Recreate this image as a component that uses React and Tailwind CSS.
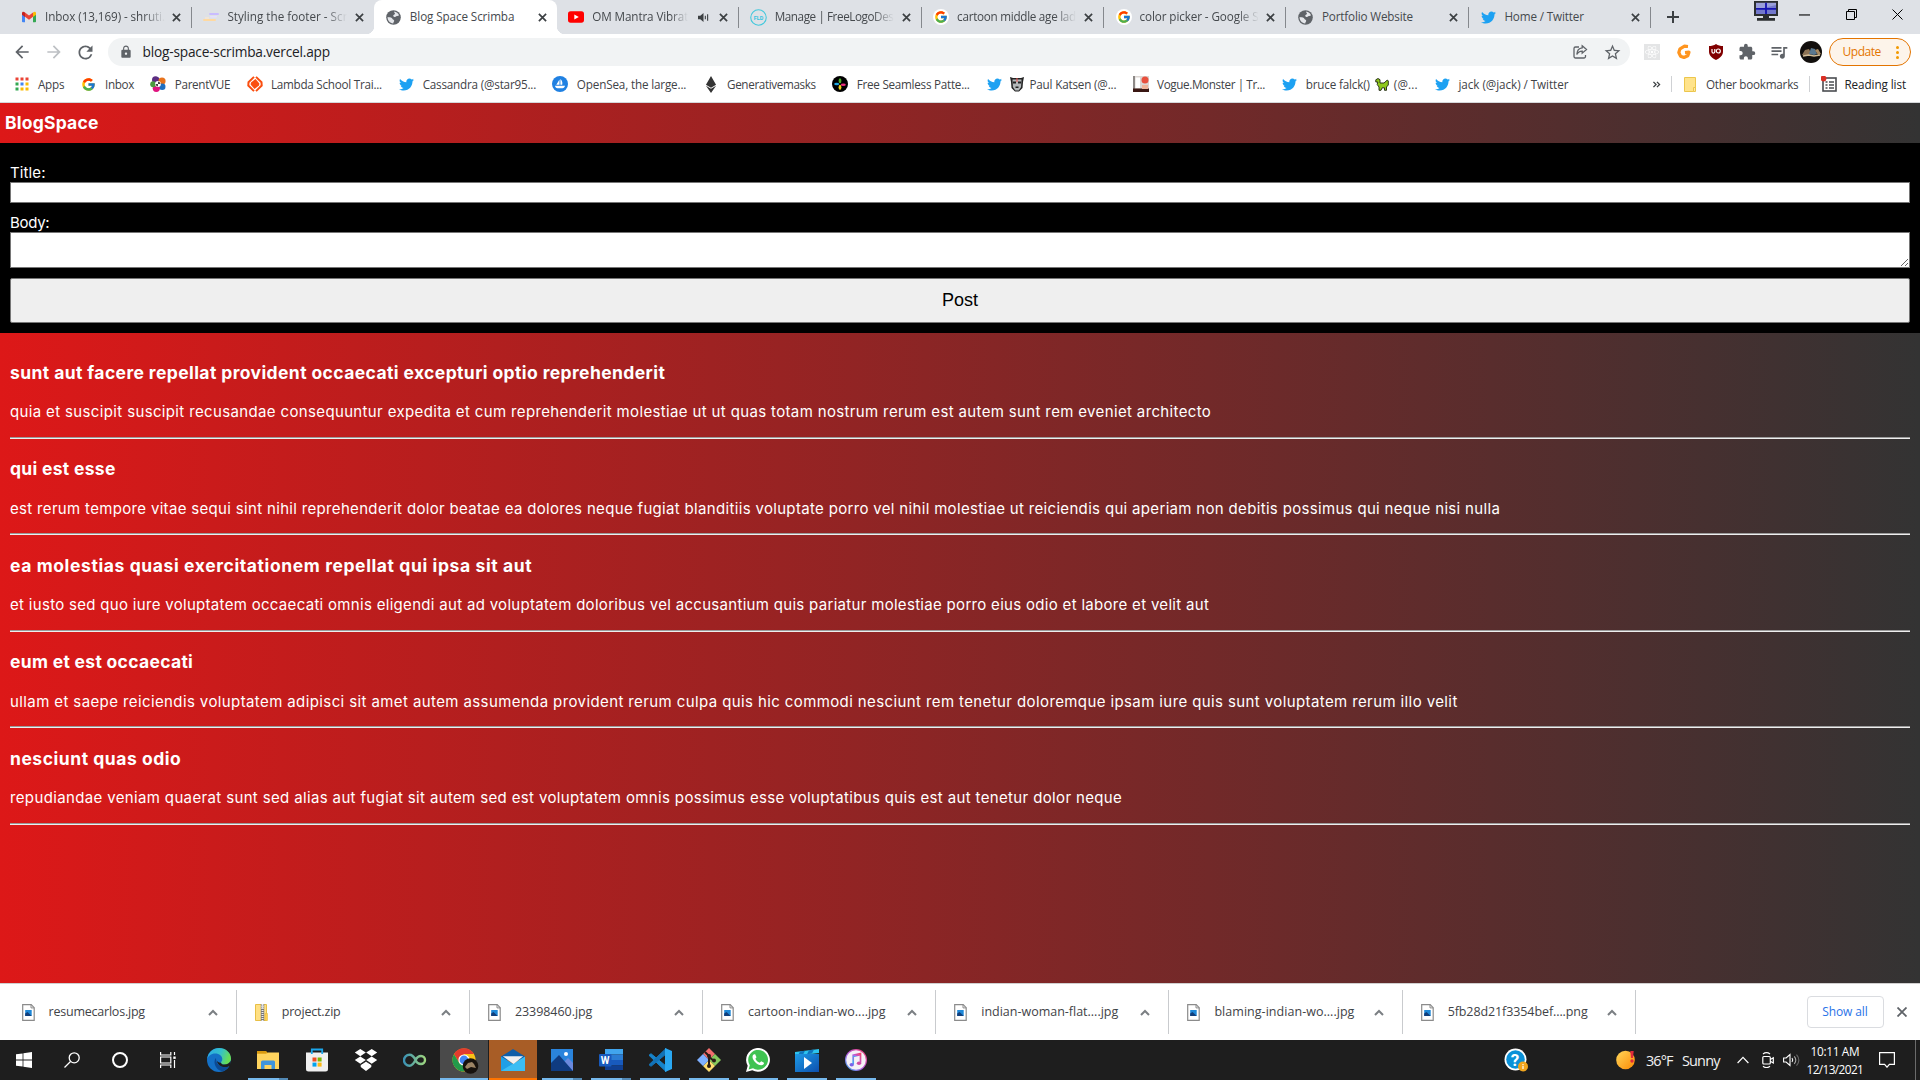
import React, { useLayoutEffect, useRef } from "react";
import { FcGoogle } from "react-icons/fc";
import { FaTwitter, FaReact, FaEthereum } from "react-icons/fa";
import { MdLock, MdExtension, MdQueueMusic, MdStarOutline, MdArrowBack, MdArrowForward, MdRefresh } from "react-icons/md";

/* Text set to an exact advance width by spreading its letter spacing. */
function Fit({ w, children, className = "" }) {
  const ref = useRef(null);
  useLayoutEffect(() => {
    const el = ref.current;
    el.style.letterSpacing = "0px";
    const natural = el.getBoundingClientRect().width;
    el.style.letterSpacing = `${(w - natural) / Math.max(1, children.length - 0.5)}px`;
  }, [w, children]);
  return (
    <span className={`block shrink-0 whitespace-pre ${className}`} style={{ width: w }}>
      <span ref={ref}>{children}</span>
    </span>
  );
}

const Twitter = () => <FaTwitter className="size-[15px] text-[#1da1f2]" />;
const Globe = () => (
  <svg viewBox="0 0 16 16" className="size-[15px]">
    <circle cx="8" cy="8" r="7.800" fill="#5f6368" />
    <path d="M8.800 1.700C11 2 13 3.500 13.900 5.700c-1.200.9-2.400.5-3.200 1.300-.9.900-2.900.2-3-1 0-1.100 1.700-1 1.900-2 .1-.8-1.300-1-.8-2.300z" fill="#e4e6ea" />
    <path d="M1.700 7.500c1.700.3 3.300.2 4.500 1.100.7.600.5 1.200 1.400 1.500 1.200.4 1.500 1.500.8 2.400-.5.600-.6 1-.7 1.800C4.300 14.200 1.500 11.200 1.700 7.500z" fill="#e4e6ea" />
  </svg>
);
const Close = () => (
  <svg viewBox="0 0 10 10" className="size-[9px]" stroke="#3c4043" strokeWidth="1.900">
    <path d="M1 1l8 8M9 1l-8 8" />
  </svg>
);
const Gmail = () => (
  <svg viewBox="0 0 16 16" className="size-4">
    <path d="M1 4v8.500c0 .5.4.8.8.8H4V6.500z" fill="#4285f4" />
    <path d="M12 6.500v6.800h2.200c.5 0 .8-.4.8-.8V4z" fill="#34a853" />
    <path d="M4 3.500v4.200L8 10.700l4-3V3.500L8 6.500z" fill="#ea4335" />
    <path d="M1 4.200v1.500l3 2.200V3.600C2.500 2.200 1 2.800 1 4.200z" fill="#c5221f" />
    <path d="M15 4.200v1.500l-3 2.200V3.600c1.500-1.400 3-.8 3 .6z" fill="#fbbc04" />
  </svg>
);
const Scrimba = () => (
  <svg viewBox="0 0 16 16" className="size-4">
    <rect x="6" y="4" width="10" height="2" rx="1" fill="#c9bcff" />
    <rect x="7" y="7" width="7" height="1.600" rx=".8" fill="#e4dfff" />
    <rect x="0" y="10" width="13" height="2" rx="1" fill="#ffd9a0" />
    <rect x="2" y="8.500" width="4" height="1" fill="#ffe9cc" />
  </svg>
);
const Youtube = () => (
  <svg viewBox="0 0 16 16" className="size-4">
    <rect x="0" y="2.300" width="16" height="11.400" rx="2.600" fill="#f00" />
    <path d="M6.300 5.400v5.200L10.800 8z" fill="#fff" />
  </svg>
);
const Fld = () => (
  <svg viewBox="0 0 16 16" className="size-[17px]">
    <circle cx="8" cy="8" r="7.300" fill="none" stroke="#41c8dc" strokeWidth="1" />
    <text x="8" y="9.900" textAnchor="middle" fontSize="5.200" fontWeight="700" fontFamily="Roboto" fill="#35c3e0">FLD</text>
  </svg>
);
const GoogleDisc = () => (
  <span className="flex size-4 items-center justify-center rounded-full bg-white"><FcGoogle className="size-[14px]" /></span>
);
const Sound = () => (
  <svg viewBox="0 0 12 12" className="size-[11px]" fill="#3c4043">
    <path d="M0 4h2.500L6 1v10L2.500 8H0z" />
    <path d="M8 4v4M10.500 2.500v7" stroke="#3c4043" strokeWidth="1.200" />
  </svg>
);

const tabs = [
  { icon: <Gmail />, t: "Inbox (13,169) - shruti.", w: 120, fade: true, sep: true },
  { icon: <Scrimba />, t: "Styling the footer - Scr", w: 120, fade: true },
  { icon: <Globe />, t: "Blog Space Scrimba", w: 104.500, active: true },
  { icon: <Youtube />, t: "OM Mantra Vibrat", w: 96, fade: true, sound: true, sep: true },
  { icon: <Fld />, t: "Manage | FreeLogoDes", w: 119, fade: true, sep: true },
  { icon: <GoogleDisc />, t: "cartoon middle age lad", w: 119, fade: true, sep: true },
  { icon: <GoogleDisc />, t: "color picker - Google S", w: 119, fade: true, sep: true },
  { icon: <Globe />, t: "Portfolio Website", w: 91, sep: true },
  { icon: <Twitter />, t: "Home / Twitter", w: 79.500, sep: true },
];

function Tab({ tab }) {
  return (
    <div className={`relative flex h-[34px] w-[182.43px] shrink-0 items-center pl-[11px] ${tab.active ? "rounded-t-lg bg-white" : ""}`}>
      {tab.active && (
        <>
          <span className="absolute -left-2 bottom-0 size-2 bg-[radial-gradient(circle_at_0_0,#dee1e6_8px,#fff_8.5px)]" />
          <span className="absolute -right-2 bottom-0 size-2 bg-[radial-gradient(circle_at_100%_0,#dee1e6_8px,#fff_8.5px)]" />
        </>
      )}
      <span className="flex w-[17px] shrink-0 justify-center">{tab.icon}</span>
      <div className={`ml-[7.5px] flex text-[11.7px] text-[#45494d] ${tab.fade ? "[mask-image:linear-gradient(to_right,#000_82%,transparent)]" : ""}`}>
        <Fit w={tab.w}>{tab.t}</Fit>
      </div>
      {tab.sound && <span className="ml-[10px]"><Sound /></span>}
      <span className="mr-[10px] ml-auto"><Close /></span>
      {tab.sep && <span className="h-[21px] w-px bg-[#85888d]" />}
    </div>
  );
}

const Monitor = () => (
  <svg viewBox="0 0 24 20" className="h-5 w-6">
    <path d="M0 0h24v15H0z" fill="#2b2e30" />
    <path d="M2 1.800h20v11.200H2z" fill="#9a9fda" />
    <path d="M2 9l20-5v9H2z" fill="#7378cc" />
    <path d="M12 1.800v11.200M2 7.800h20" stroke="#1512b0" strokeWidth="1.800" />
    <path d="M9 15h6v2h6v2.800H3V17h6z" fill="#2b2e30" />
  </svg>
);

function TabStrip() {
  return (
    <div className="flex h-[34px] bg-[#dee1e6] pl-[9.5px]">
      {tabs.map((t) => <Tab key={t.t} tab={t} />)}
      <div className="flex w-[44px] items-center justify-center">
        <svg viewBox="0 0 14 14" className="size-[14px]" stroke="#3c4043" strokeWidth="2"><path d="M7 1v12M1 7h12" /></svg>
      </div>
      <div className="ml-auto flex h-7 items-center pr-[17px]">
        <span className="mr-[21px] -mt-[6px]"><Monitor /></span>
        <svg viewBox="0 0 12 12" className="mr-[36px] size-[11px]" stroke="#000" strokeWidth="1.200"><path d="M0 6.500h12" /></svg>
        <svg viewBox="0 0 11 11" className="mr-[35px] size-[11px]" stroke="#000" fill="none"><path d="M.5 2.500h8v8h-8zM2.500 2.500v-2h8v8h-2" /></svg>
        <svg viewBox="0 0 11 11" className="size-[11px]" stroke="#000"><path d="M.5.5l10 10M10.500.5l-10 10" /></svg>
      </div>
    </div>
  );
}

function Toolbar() {
  return (
    <div className="flex h-9 items-center bg-white pl-3">
      <MdArrowBack className="size-5 text-[#5f6368]" />
      <MdArrowForward className="ml-[12px] size-5 text-[#bdc0c4]" />
      <MdRefresh className="ml-[11px] size-[21px] text-[#5f6368]" />
      <div className="ml-3 flex h-7 w-[1522px] items-center rounded-full bg-[#f1f3f4] pr-2 pl-[11px]">
        <MdLock className="size-[14px] text-[#5f6368]" />
        <div className="ml-[9.5px] text-[13.700px] text-[#202124]"><Fit w={187.500}>blog-space-scrimba.vercel.app</Fit></div>
        <svg viewBox="0 0 16 16" className="mr-[15px] ml-auto size-4" fill="none" stroke="#5f6368" strokeWidth="1.300">
          <path d="M7 3H3.500A1.500 1.500 0 0 0 2 4.500v8A1.500 1.500 0 0 0 3.500 14h8.500a1.500 1.500 0 0 0 1.500-1.500V11" />
          <path d="M10.200 1.800L14.500 5.500l-4.300 3.700V7.100C7.500 7.100 6 8.200 4.800 10.500 5 6.800 6.800 4.200 10.200 3.900z" />
        </svg>
        <MdStarOutline className="size-[19px] text-[#5f6368]" />
      </div>
      <span className="ml-[13.500px] flex size-4 items-center justify-center bg-[#e4e5e6]"><FaReact className="size-[14px] text-white" /></span>
      <svg viewBox="0 0 16 16" className="ml-4 size-4" fill="none" stroke="#ff951f" strokeWidth="3.200" strokeLinejoin="round">
        <path d="M12 2.500L8.500 2.200 4 4.800 2.800 8.500 4.500 12.200 8 13.500l3.800-1.700L13 8.200 9 8.600" />
      </svg>
      <svg viewBox="0 0 16 16" className="ml-4 size-4">
        <path d="M8 0c2 1.600 4.500 2 7 2v5.500c0 4-3 6.800-7 8.500-4-1.700-7-4.500-7-8.500V2c2.500 0 5-.4 7-2z" fill="#800000" />
        <path d="M4 5v2.700a1.400 1.400 0 0 0 2.800 0V5" stroke="#fff" fill="none" strokeWidth="1.200" />
        <circle cx="10.300" cy="7" r="2" stroke="#fff" strokeWidth="1.200" fill="none" />
      </svg>
      <MdExtension className="ml-[14.500px] size-[18px] text-[#5f6368]" />
      <MdQueueMusic className="ml-[13px] size-5 text-[#5f6368]" />
      <Avatar className="ml-[11px] size-[22px]" />
      <div className="ml-[7px] flex h-7 w-[82px] items-center rounded-full border border-[#e37400] bg-[#fdf4ea] pl-[12.500px] text-[12px] text-[#e37400]">
        <Fit w={38.500}>Update</Fit>
        <span className="ml-[15px] flex flex-col gap-[2px]">
          <i className="size-[3px] rounded-full bg-[#f29900]" /><i className="size-[3px] rounded-full bg-[#f29900]" /><i className="size-[3px] rounded-full bg-[#f29900]" />
        </span>
      </div>
    </div>
  );
}

function Avatar({ className }) {
  return (
    <svg viewBox="0 0 22 22" className={className}>
      <circle cx="11" cy="11" r="11" fill="#120f0d" />
      <path d="M2 14l3-5 4-1 2 4-3 3z" fill="#8d7355" />
      <path d="M9 13l2-6 4 1 2 5-3 1z" fill="#5a7890" />
      <path d="M15 9l3-1 3 5-3 1z" fill="#a98a62" />
      <path d="M3 15l6-1 5 1 6-1" stroke="#d3bd98" strokeWidth="1.300" fill="none" />
    </svg>
  );
}

const AppsGrid = () => (
  <svg viewBox="0 0 16 16" className="size-4">
    {["#ea4335", "#ea4335", "#ea4335", "#34a853", "#4285f4", "#fbbc04", "#34a853", "#fbbc04", "#fbbc04"].map((c, i) => (
      <rect key={i} x={1.500 + (i % 3) * 5} y={1.500 + Math.floor(i / 3) * 5} width="3" height="3" fill={c} />
    ))}
  </svg>
);
const ParentVue = () => (
  <svg viewBox="0 0 16 16" className="size-4">
    <path d="M8 8L2.500 5A4 4 0 0 1 9.500 2.500z" fill="#5b2d82" />
    <circle cx="5.500" cy="3.800" r="3.500" fill="#5b2d82" /><circle cx="12" cy="5" r="3.600" fill="#e8731c" />
    <circle cx="12.200" cy="10.800" r="3.300" fill="#1f6fc0" /><circle cx="6.300" cy="12.300" r="3.600" fill="#e0147f" />
    <circle cx="3.200" cy="8.200" r="3" fill="#4c9a3f" /><circle cx="8" cy="8" r="2.900" fill="#fff" />
    <path d="M8 5.500a3 3 0 0 1 2.500 2.500H8zM8 10.500A3 3 0 0 1 5.500 8H8z" fill="#444" />
  </svg>
);
const Lambda = () => (
  <svg viewBox="0 0 16 16" className="size-4" fill="#fa4e0f">
    <path d="M8.500 3L12.400 7.500 12 9.500 7.500 13 3.600 8.500 4 6.500z" />
    <path d="M7 .9L1.500 6.200 1.300 9.500 7 15.100M9 .9l5.500 5.300.2 3.300L9 15.100" fill="none" stroke="#fa4e0f" strokeWidth="2" />
  </svg>
);
const OpenSea = () => (
  <svg viewBox="0 0 16 16" className="size-4">
    <circle cx="8" cy="8" r="8" fill="#2081e2" />
    <path d="M7.500 3.500v5.200H4.300zM8.400 3c1.800 1.700 2.300 3.500 1.800 5.700H8.400zM3 9.800h10c-.3 1.500-1.300 2.400-2.500 2.400H5.500C4.200 12.200 3.200 11.300 3 9.800z" fill="#fff" />
  </svg>
);
const Seamless = () => (
  <svg viewBox="0 0 16 16" className="size-4">
    <circle cx="8" cy="8" r="8" fill="#000" />
    <ellipse cx="8" cy="4.700" rx="1.400" ry="2.500" fill="#4caf2f" /><ellipse cx="8" cy="11.300" rx="1.400" ry="2.500" fill="#f3d21b" />
    <ellipse cx="4.700" cy="8" rx="2.500" ry="1.300" fill="#21a7e0" /><ellipse cx="11.300" cy="8.700" rx="2.500" ry="1.300" fill="#ec2f7b" />
  </svg>
);
const Vogue = () => (
  <svg viewBox="0 0 16 16" className="size-4">
    <rect width="16" height="16" fill="#dcd6d3" /><path d="M0 0h2v13H0z" fill="#8d8987" /><rect x="2.500" y="1.500" width="4.500" height="10.500" fill="#fff" />
    <rect y="12.500" width="16" height="3.500" fill="#3a1713" /><rect x="9" y="9" width="6" height="4" fill="#f0b49a" />
    <circle cx="12" cy="4" r="3.500" fill="#e8503e" />
  </svg>
);
const Mask = () => (
  <svg viewBox="0 0 14 16" className="h-4 w-[14px]">
    <path d="M0 1l3 1h8l3-1-1 5-.5 6L9 15.500H5L1.500 12 1 6z" fill="#222" />
    <path d="M2.500 3.500h9l-.4 7.500-2.400 3.500H5.300L2.900 11z" fill="#b3b8ba" />
    <path d="M3 5.500h3v2H3zM8 5.500h3v2H8zM5.500 10.500h3v1.500h-3z" fill="#222" /><path d="M6.500 2h1v4h-1z" fill="#e55" />
  </svg>
);
const Dino = () => (
  <svg viewBox="0 0 14 14" className="size-[14px]">
    <path d="M.8 2.800L3 1.500l2 1.200V6h4l3.300-3 1 1v4l-1.800 2v3.300H9.500v-2.500H7.200L6 13.300H4V10L2.200 7.500 2.800 5H.8z" fill="#8fc81c" stroke="#1d2410" strokeWidth=".9" />
  </svg>
);

const bookmarks = [
  [<AppsGrid />, "Apps", 26.500], [<FcGoogle className="size-[15px]" />, "Inbox", 29], [<ParentVue />, "ParentVUE", 55.500],
  [<Lambda />, "Lambda School Trai...", 111], [<Twitter />, "Cassandra (@star95...", 113.500], [<OpenSea />, "OpenSea, the large...", 109.500],
  [<FaEthereum className="size-[17px] text-[#343434]" />, "Generativemasks", 89], [<Seamless />, "Free Seamless Patte...", 113],
];

function Bookmark({ icon, children }) {
  return <div className="mr-[16.3px] flex shrink-0 items-center"><span className="mr-[8.4px] flex w-4 justify-center">{icon}</span>{children}</div>;
}

function Bookmarks() {
  return (
    <div className="flex h-[33px] items-center border-b border-[#d5d7da] bg-white pl-[13.5px] pb-[3px] text-[11.7px] text-[#3f4347]">
      {bookmarks.map(([icon, t, w]) => <Bookmark key={t} icon={icon}><Fit w={w}>{t}</Fit></Bookmark>)}
      <Bookmark icon={<Twitter />}><Mask /><Fit w={87} className="ml-[5px]">Paul Katsen (@...</Fit></Bookmark>
      <Bookmark icon={<Vogue />}><Fit w={108}>Vogue.Monster | Tr...</Fit></Bookmark>
      <Bookmark icon={<Twitter />}><Fit w={64}>bruce falck()</Fit><span className="mx-[5px]"><Dino /></span><Fit w={24}>(@...</Fit></Bookmark>
      <Bookmark icon={<Twitter />}><Fit w={110}>jack (@jack) / Twitter</Fit></Bookmark>
      <div className="ml-auto flex items-center pr-[14px]">
        <svg viewBox="0 0 9 8" className="mr-[10px] h-[7px] w-[9px]" fill="none" stroke="#3c4043" strokeWidth="1.500"><path d="M1 1l3 3-3 3M5 1l3 3-3 3" /></svg>
        <span className="mr-[12px] h-4 w-px bg-[#cfd1d4]" />
        <svg viewBox="0 0 12 15" className="mr-[10.500px] h-[15px] w-3"><path d="M.5.500h11v11.500l-2 0v2.500h-9z" fill="#ffe38b" stroke="#ecc64d" /><path d="M9.500 10.500h2v4h-2z" fill="#ffe9a6" stroke="#ecc64d" /></svg>
        <Fit w={92.500}>Other bookmarks</Fit>
        <span className="mx-[10.500px] h-4 w-px bg-[#cfd1d4]" />
        <svg viewBox="0 0 16 16" className="mr-[8px] size-4">
          <rect x="2" y="2" width="13" height="13" fill="none" stroke="#4a4d51" strokeWidth="1.600" />
          <path d="M4.500 6h2M8 6h5M4.500 9h2M8 9h5M4.500 12h2M8 12h5" stroke="#4a4d51" strokeWidth="1.400" />
          <circle cx="2.500" cy="2.500" r="2.900" fill="#d93025" />
        </svg>
        <Fit w={61.500} className="text-[#202124]">Reading list</Fit>
      </div>
    </div>
  );
}

const posts = [
  ["sunt aut facere repellat provident occaecati excepturi optio reprehenderit", 655, "quia et suscipit suscipit recusandae consequuntur expedita et cum reprehenderit molestiae ut ut quas totam nostrum rerum est autem sunt rem eveniet architecto", 1201],
  ["qui est esse", 105.500, "est rerum tempore vitae sequi sint nihil reprehenderit dolor beatae ea dolores neque fugiat blanditiis voluptate porro vel nihil molestiae ut reiciendis qui aperiam non debitis possimus qui neque nisi nulla", 1490],
  ["ea molestias quasi exercitationem repellat qui ipsa sit aut", 522, "et iusto sed quo iure voluptatem occaecati omnis eligendi aut ad voluptatem doloribus vel accusantium quis pariatur molestiae porro eius odio et labore et velit aut", 1199],
  ["eum et est occaecati", 183, "ullam et saepe reiciendis voluptatem adipisci sit amet autem assumenda provident rerum culpa quis hic commodi nesciunt rem tenetur doloremque ipsam iure quis sunt voluptatem rerum illo velit", 1447.500],
  ["nesciunt quas odio", 171, "repudiandae veniam quaerat sunt sed alias aut fugiat sit autem sed est voluptatem omnis possimus esse voluptatibus quis est aut tenetur dolor neque", 1112],
];

function Page() {
  return (
    <main className="flex h-[880px] flex-col bg-[linear-gradient(to_right,#dd1818,#333333)] font-['Inter',sans-serif] text-white">
      <header className="flex h-10 shrink-0 items-center pl-[5px] text-[17.500px] font-bold"><Fit w={93.500}>BlogSpace</Fit></header>
      <form className="flex h-[190px] shrink-0 flex-col bg-black px-[10px] pt-5 text-[15px] leading-[19px]">
        <label className="block"><Fit w={35.500}>Title:</Fit></label>
        <input className="h-[21px] border border-[#767676] bg-white" />
        <label className="mt-[10px] block"><Fit w={39.500}>Body:</Fit></label>
        <textarea className="h-9 resize-y border border-[#767676] bg-white" />
        <button type="button" className="mt-[10px] h-[45px] shrink-0 rounded-[2px] border border-[#767676] bg-[#efefef] pb-px font-['Liberation_Sans',sans-serif] text-[18px] text-black">Post</button>
      </form>
      <section className="px-[10px] pt-[9.4px]">
        {posts.map(([title, tw, body, bw]) => (
          <article key={title} className="flex h-[96.5px] flex-col pt-[19.3px]">
            <h3 className="text-[17.500px] leading-[22px] font-bold"><Fit w={tw}>{title}</Fit></h3>
            <p className="mt-[18.5px] text-[15px] leading-5"><Fit w={bw}>{body}</Fit></p>
            <hr className="mt-auto h-[2px] border-t border-b border-t-[#9a9a9a] border-b-[#eeeeee]" />
          </article>
        ))}
      </section>
    </main>
  );
}

const JpgFile = () => (
  <svg viewBox="0 0 13 17" className="h-[17px] w-[13px]">
    <path d="M.7.700h8.500l3 3v12.600H.7z" fill="#fff" stroke="#8b8b8b" strokeWidth="1.200" /><path d="M9 .7v3.200h3.200" fill="none" stroke="#8b8b8b" />
    <rect x="3.200" y="6" width="6.500" height="6" fill="#1e88d8" /><path d="M3.200 12v-2.500l2.300-1.500 4.200 4z" fill="#123f7c" />
  </svg>
);
const ZipFile = () => (
  <svg viewBox="0 0 13 17" className="h-[17px] w-[13px]">
    <path d="M.5.500h11v16H.5z" fill="#ffe083" stroke="#e8bf45" /><path d="M10 9.500h2.500v7H10z" fill="#ffd04f" stroke="#e8bf45" strokeWidth=".6" />
    <path d="M7.500 0v17" stroke="#777" strokeWidth="3.400" /><path d="M7.500 0v17" stroke="#eee" strokeWidth="2" strokeDasharray="1 1" /><rect x="6.500" y="1" width="2" height="4" fill="#ddd" />
  </svg>
);

const downloads = [["resumecarlos.jpg", 96.500], ["project.zip", 59], ["23398460.jpg", 77.500], ["cartoon-indian-wo....jpg", 137.500], ["indian-woman-flat....jpg", 137], ["blaming-indian-wo....jpg", 140], ["5fb28d21f3354bef....png", 140]];

function Downloads() {
  return (
    <div className="flex h-[57px] items-center border-t border-[#d0cfcf] bg-white pl-[3.5px]">
      {downloads.map(([name, w], i) => (
        <div key={name} className="flex h-11 w-[233.2px] shrink-0 items-center border-r border-[#c9cbce] pl-[18px] text-[12.500px] text-[#3f4347]">
          {i === 1 ? <ZipFile /> : <JpgFile />}
          <span className="ml-[14px]"><Fit w={w}>{name}</Fit></span>
          <svg viewBox="0 0 10 7" className="mr-[18px] ml-auto h-[7px] w-[10px]" fill="none" stroke="#7b7f83" strokeWidth="2"><path d="M1 6l4-4 4 4" /></svg>
        </div>
      ))}
      <button type="button" className="mr-[13.500px] mb-px ml-auto flex h-8 w-[77px] items-center justify-center rounded border border-[#dadce0] text-[12px] text-[#2a73e8]"><Fit w={45.500}>Show all</Fit></button>
      <svg viewBox="0 0 10 10" className="mr-[13px] mb-px size-[10px]" stroke="#5f6368" strokeWidth="1.800"><path d="M.5.500l9 9M9.500.5l-9 9" /></svg>
    </div>
  );
}

const art = {
  edge: (
    <svg viewBox="0 0 24 24" className="size-6">
      <defs><linearGradient id="eg" x1="0" y1="0" x2="1" y2=".3"><stop offset="0" stopColor="#2aa7e8" /><stop offset=".6" stopColor="#35c1c9" /><stop offset="1" stopColor="#66dd57" /></linearGradient></defs>
      <circle cx="12" cy="12" r="12" fill="#1470c6" />
      <path d="M.2 11C1 4.500 6 0 12 0c7 0 12 5 12 10.500 0 4-3 6-6.500 6-2.500 0-3.500-1-3.500-1.800 0-.9 1.300-1.500 1.300-3.700 0-2.800-3-5.500-7-5.500C4 5.500 1 8 .2 11z" fill="url(#eg)" />
      <path d="M9 10c-2 2-2 6 0 9 1.500 2.500 4 4 6.500 4.300 3-.8 5.500-3 6.700-5.500-2 1-5 1.500-7.500.7C11 17.500 9 14 9 10z" fill="#0c4a94" />
      <path d="M14 14.700c0 .8 1 1.800 3.500 1.800 2.700 0 5.200-1.300 6.100-3.700L24 18l-2 .2c-1.800 1-5.200 1.200-7.500.3-2.600-1-4.600-3.700-4.700-6 .8 1.500 2.500 2.500 4.200 2.200z" fill="#1e1e1e" />
    </svg>
  ),
  explorer: (
    <svg viewBox="0 0 24 24" className="size-6">
      <path d="M1 3h9l2 2H23v3H1z" fill="#e3a316" /><path d="M1 5.500l10 0 1-1h11V21H1z" fill="#ffd45e" /><path d="M1 3h9v2.500H1z" fill="#d99a10" />
      <path d="M5 21v-7a1.500 1.500 0 0 1 1.500-1.500h11A1.500 1.500 0 0 1 19 14v7h-3.500v-4h-7v4z" fill="#3f95dc" />
    </svg>
  ),
  store: (
    <svg viewBox="0 0 24 24" className="size-6">
      <path d="M1 4.500h22v16.500a2.500 2.500 0 0 1-2.500 2.500h-17A2.500 2.500 0 0 1 1 21z" fill="#f0f0f0" />
      <path d="M6.800 6V1.500h10.400V6" fill="none" stroke="#1ca7ec" strokeWidth="1.800" />
      <path d="M7.500 9.500h4v4h-4z" fill="#f04f23" /><path d="M12.600 9.500h4v4h-4z" fill="#7db700" /><path d="M7.500 14.600h4v4h-4z" fill="#00a3ee" /><path d="M12.600 14.600h4v4h-4z" fill="#fdb813" />
    </svg>
  ),
  dropbox: (
    <svg viewBox="0 0 24 24" className="size-6" fill="#fff">
      <path d="M6.300 1l5.500 3.600-5.500 3.600L.8 4.600zM17.700 1l5.500 3.600-5.500 3.600-5.500-3.600zM6.300 8.500l5.500 3.600-5.500 3.600-5.500-3.600zM17.700 8.500l5.500 3.600-5.500 3.600-5.500-3.600zM12 13.300l5.300 3.500V19L12 23l-5.300-4v-2.200z" />
      <path d="M6.500 16.700L12 13.300l5.500 3.400" fill="none" stroke="#1e1e1e" strokeWidth=".8" />
    </svg>
  ),
  infinity: (
    <svg viewBox="0 0 24 24" className="size-6">
      <defs><linearGradient id="ig"><stop offset="0" stopColor="#3b93b5" /><stop offset="1" stopColor="#9dd57f" /></linearGradient></defs>
      <path d="M12.500 12C10.500 16 9 17.800 6.500 17.800a5.500 5.500 0 0 1 0-11C9 6.800 10.500 8 12.500 12c1.300 3 2.800 4 5.500 4a4 4 0 0 0 0-8c-2.700 0-4.200 1.500-5.500 4z" fill="none" stroke="url(#ig)" strokeWidth="2.400" />
    </svg>
  ),
  chrome: (
    <svg viewBox="0 0 27 26" className="mt-[2px] ml-[2px] h-[26px] w-[27px]">
      <circle cx="12" cy="12" r="11.500" fill="#fbc116" /><path d="M12 6h10a11.500 11.500 0 0 0-20 0l5 8.500z" fill="#e33b2e" />
      <path d="M2 6.200l5.500 9L12 17.500l4-1-4 7A11.500 11.500 0 0 1 2 6.200z" fill="#229a4b" />
      <circle cx="12" cy="12" r="5.600" fill="#fff" /><circle cx="12" cy="12" r="4.400" fill="#4285f4" />
      <circle cx="18.500" cy="18" r="7.800" fill="#17120e" /><path d="M13 19l3-4 4-1 2 2 2 4-5-1-4 2z" fill="#9c8465" />
    </svg>
  ),
  mail: (
    <svg viewBox="0 0 24 24" className="size-6">
      <path d="M0 8.500L12 1l12 7.500V12H0z" fill="#0f5ea8" />
      <path d="M0 8.500L24 23H0z" fill="#1f9fe6" /><path d="M24 8.500V23H0z" fill="#3bbdf3" /><path d="M1.800 8.300h20.400L12.500 16z" fill="#f1f1f1" />
    </svg>
  ),
  photos: (
    <svg viewBox="0 0 24 24" className="size-6">
      <path d="M1 1h22v22H1z" fill="#2a84dc" /><path d="M14 14l4-4 5 5v8H12z" fill="#6a89dd" /><path d="M1 15l8-8 14 16H1z" fill="#0f3b80" /><circle cx="16" cy="6" r="2" fill="#fff" />
    </svg>
  ),
  word: (
    <svg viewBox="0 0 24 24" className="size-6">
      <path d="M6 1h18v5.500H6z" fill="#41a5ee" /><path d="M6 6.500h18V12H6z" fill="#2b7cd3" /><path d="M6 12h18v5.500H6z" fill="#185abd" /><path d="M6 17.500h18V22H6z" fill="#103f91" />
      <rect y="6" width="12.500" height="12.500" rx="1" fill="#185abd" /><text x="6.200" y="16" fontSize="10" fontWeight="700" fontFamily="Roboto" textAnchor="middle" fill="#fff">W</text>
    </svg>
  ),
  vscode: (
    <svg viewBox="0 0 24 24" className="size-6">
      <path d="M1 7.300l2-1.600L18 18v5.500z" fill="#1684cc" stroke="#1684cc" strokeLinejoin="round" /><path d="M1 16.700l2 1.600L18 6V.5z" fill="#1273b8" stroke="#1273b8" strokeLinejoin="round" />
      <path d="M17 0l7 3v18l-7 3z" fill="#2aa8f2" />
    </svg>
  ),
  git: (
    <svg viewBox="0 0 24 24" className="size-6">
      <path d="M12 0l6 6-6 6-6-6z" fill="#f26d6d" /><path d="M18 6l6 6-6 6-6-6z" fill="#86c95d" /><path d="M12 12l6 6-6 6-6-6z" fill="#ffdd70" /><path d="M6 6l6 6-6 6-6-6z" fill="#7fb0ff" />
      <path d="M8 4l4 4v9M12 9l5 4" stroke="#2a1c16" strokeWidth="2" fill="none" /><circle cx="12" cy="18" r="2" fill="#2a1c16" /><circle cx="17" cy="12.500" r="2" fill="#2a1c16" /><circle cx="12" cy="8" r="2" fill="#2a1c16" />
    </svg>
  ),
  whatsapp: (
    <svg viewBox="0 0 24 24" className="size-6">
      <path d="M0 24l1.700-6.200A11.900 11.900 0 1 1 6.300 22.300z" fill="#fff" /><path d="M2.600 21.400l1.200-4.200A9.900 9.900 0 1 1 7 20.300z" fill="#3fc351" />
      <path d="M8.300 6.300c-.8 0-1.800 1-1.800 2.700 0 3 4.500 8.300 8.800 8.300 1.700 0 2.700-1 2.700-2.500l-2.800-1.500-1.500 1.500c-2-.7-3.500-2.200-4.300-4L10.500 9.300 9.200 6.300z" fill="#fff" />
    </svg>
  ),
  movies: (
    <svg viewBox="0 0 24 24" className="size-6">
      <defs><linearGradient id="mg" x2="1" y2="1"><stop stopColor="#1d9be6" /><stop offset="1" stopColor="#0d4fae" /></linearGradient></defs>
      <path d="M0 4L24 1v4L0 8z" fill="#2cc3ee" /><path d="M5 3.400l-2 4 5-.7 2-4zM14 2.200l-2 4 5-.6 2-4z" fill="#0f75bd" /><path d="M0 6h24v18H0z" fill="url(#mg)" /><path d="M9 9l8 6-8 6z" fill="#fff" />
    </svg>
  ),
  itunes: (
    <svg viewBox="0 0 24 24" className="size-6">
      <defs><linearGradient id="tg" x1="1" x2="0" y2="1"><stop stopColor="#f4416c" /><stop offset=".55" stopColor="#b45ae0" /><stop offset="1" stopColor="#31b7f3" /></linearGradient></defs>
      <circle cx="12" cy="12" r="11" fill="url(#tg)" /><circle cx="12" cy="12" r="9.800" fill="#f5f1f7" />
      <path d="M9.200 16.300V7.200l7.300-1.700v9.300" stroke="url(#tg)" strokeWidth="1.700" fill="none" /><path d="M9.200 8.500l7.300-1.700" stroke="url(#tg)" strokeWidth="1.500" />
      <ellipse cx="7.700" cy="16.700" rx="2.200" ry="1.800" fill="#7a63ea" /><ellipse cx="15" cy="15.200" rx="2.200" ry="1.800" fill="#d04aa6" />
    </svg>
  ),
};

const apps = [["edge", ""], ["explorer", "multi"], ["store", ""], ["dropbox", ""], ["infinity", ""], ["chrome", "active"], ["mail", "alert"], ["photos", "multi"], ["word", "multi"], ["vscode", "run"], ["git", "run"], ["whatsapp", "run"], ["movies", "run"], ["itunes", "run"]];

function AppButton({ name, state }) {
  const bg = state === "active" ? "bg-[#4a4a4a]" : state === "alert" ? "bg-[#a85d26]" : "";
  return (
    <div className={`mr-px flex h-10 w-12 shrink-0 flex-col items-center ${bg}`}>
      <div className="flex h-[38px] items-center justify-center pt-[2px]">{art[name]}</div>
      {(state === "run") && <div className="h-[2px] w-10 bg-[#76b9ed]" />}
      {state === "multi" && <div className="flex h-[2px] w-10"><i className="grow bg-[#76b9ed]" /><i className="w-[9px] bg-[#5289b5]" /></div>}
      {state === "active" && <div className="h-[2px] w-12 bg-[#76b9ed]" />}
      {state === "alert" && <div className="h-[2px] w-12 bg-[#ff7400]" />}
    </div>
  );
}

function Taskbar() {
  return (
    <div className="flex h-10 items-center bg-[#1e1e1e] text-white">
      <div className="flex w-12 justify-center"><svg viewBox="0 0 16 16" className="size-4" fill="#fff"><path d="M0 2.300l6.600-.9v6.200H0zM7.400 1.300L16 .1v7.500H7.400zM0 8.400h6.600v6.200L0 13.700zM7.400 8.400H16v7.500l-8.600-1.200z" /></svg></div>
      <div className="flex w-12 justify-center"><svg viewBox="0 0 16 16" className="size-4" fill="none" stroke="#fff" strokeWidth="1.300"><circle cx="10.200" cy="5.800" r="5" /><path d="M6.500 9.500L.5 15.500" /></svg></div>
      <div className="flex w-12 justify-center"><span className="size-4 rounded-full border-2 border-white" /></div>
      <div className="flex w-[51px] justify-center pr-[3px]"><svg viewBox="0 0 16 16" className="size-4" fill="none" stroke="#fff" strokeWidth="1.200"><path d="M.6 0v3h10.200V0M.6 16v-3h10.200v3M.6 5h10.200v6H.6zM14.500 0v3M14.500 8v8" /><path d="M13.300 4.500h2.400v2.400h-2.400z" fill="#fff" stroke="none" /></svg></div>
      {apps.map(([n, s]) => <AppButton key={n} name={n} state={s} />)}
      <div className="ml-auto flex items-center">
        <svg viewBox="0 0 24 24" className="mr-[88px] size-6">
          <circle cx="11.500" cy="11.500" r="11" fill="#fff" /><circle cx="11.500" cy="11.500" r="9.300" fill="#0a91d8" />
          <text x="11" y="17.500" fontSize="17" fontWeight="700" fontFamily="Roboto" textAnchor="middle" fill="#fff">?</text>
          <circle cx="19" cy="18.500" r="5" fill="#f0a51e" /><path d="M19 16v1.200M19 18v3" stroke="#fff" strokeWidth="1.200" />
        </svg>
        <svg viewBox="0 0 20 20" className="mr-[10px] size-5">
          <defs><linearGradient id="sun" x2="1" y2="1"><stop stopColor="#ffd75a" /><stop offset="1" stopColor="#fb8a04" /></linearGradient></defs>
          <circle cx="9.500" cy="10" r="9.300" fill="url(#sun)" /><path d="M14.300 1h3.400l-.7 7h-2z" fill="#e02a3a" /><circle cx="16" cy="11" r="1.700" fill="#e02a3a" />
        </svg>
        <div className="flex gap-[9px] pt-[2px] text-[14.500px] text-[#f2f2f2]"><Fit w={27}>36°F</Fit><Fit w={38}>Sunny</Fit></div>
        <svg viewBox="0 0 12 8" className="mr-[12px] ml-[17px] h-2 w-3" fill="none" stroke="#fff" strokeWidth="1.200"><path d="M.6 7L6 1.300 11.400 7" /></svg>
        <svg viewBox="0 0 14 16" className="mr-[8px] h-4 w-[14px]" fill="none" stroke="#fff" strokeWidth="1.200"><rect x="1.800" y="4.500" width="7.500" height="7.500" rx="1" /><path d="M9.300 7.500l3-1.800v5.200l-3-1.700M2 2c2-1.500 5-1.500 7 0M2 14.300c2 1.500 5 1.500 7 0" /></svg>
        <svg viewBox="0 0 17 14" className="mr-[6px] h-[14px] w-[17px]" fill="none" stroke="#fff" strokeWidth="1.100"><path d="M.6 5h2.500L7 1.500v11L3.100 9H.6z" /><path d="M9 5c1 1.300 1 2.700 0 4" /><path d="M11.300 3.300c2 2.500 2 5 0 7.500" stroke="#aaa" /><path d="M13.500 1.700c3 3.500 3 7.500 0 11" stroke="#666" /></svg>
        <div className="-mt-px flex w-[58px] flex-col items-center text-[11.800px] leading-[18px]"><Fit w={49}>10:11 AM</Fit><Fit w={57}>12/13/2021</Fit></div>
        <svg viewBox="0 0 16 16" className="mr-[20px] ml-[15px] size-4" fill="none" stroke="#fff" strokeWidth="1.200"><path d="M.6.600h14.800v11.800h-5l-2.400 2.800-2.400-2.800h-5z" /></svg>
        <span className="mr-1 h-10 w-px bg-[#6b6b6b]" />
      </div>
    </div>
  );
}

export default function App() {
  return (
    <div className="flex h-[1080px] w-[1920px] flex-col overflow-hidden bg-white font-['Open_Sans','Noto_Sans',sans-serif]">
      <TabStrip />
      <Toolbar />
      <Bookmarks />
      <Page />
      <Downloads />
      <Taskbar />
    </div>
  );
}
